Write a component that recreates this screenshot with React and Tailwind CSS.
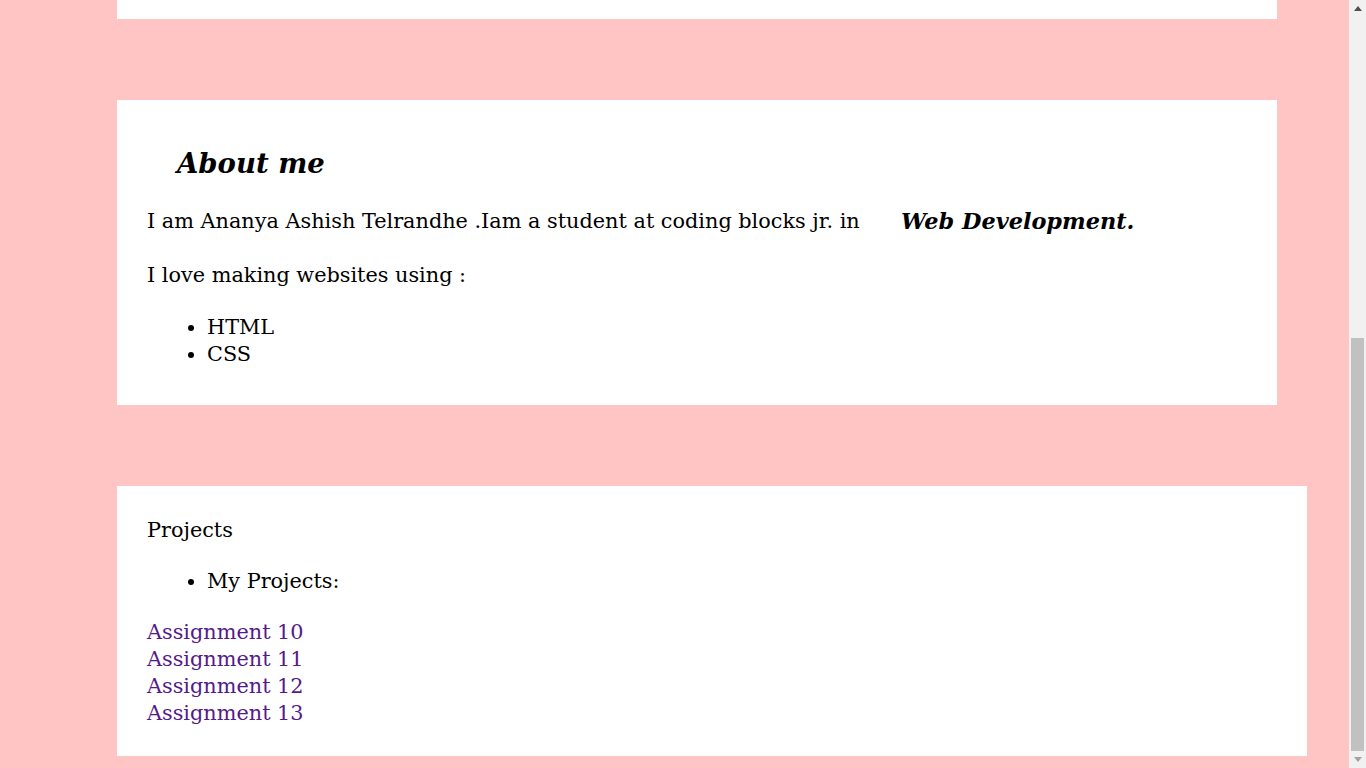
import React, { useLayoutEffect, useRef } from "react";

const serif = { fontFamily: '"DejaVu Serif", Georgia, serif' };

function ScrollBar() {
  return (
    <div className="flex w-[17px] shrink-0 flex-col bg-[#f1f1f1]">
      <div className="flex h-[17px] items-center justify-center">
        <svg width="8" height="5" viewBox="0 0 8 5">
          <path d="M0 5 L4 0 L8 5 Z" fill="#505050" />
        </svg>
      </div>
      <div className="flex flex-1 flex-col justify-end px-[2px]">
        <div className="h-[413px] bg-[#c1c1c1]" />
      </div>
      <div className="flex h-[17px] items-center justify-center">
        <svg width="8" height="5" viewBox="0 0 8 5">
          <path d="M0 0 L8 0 L4 5 Z" fill="#a3a3a3" />
        </svg>
      </div>
    </div>
  );
}

export default function App() {
  const scroller = useRef(null);

  // page is shown scrolled all the way down
  useLayoutEffect(() => {
    if (scroller.current) scroller.current.scrollTop = scroller.current.scrollHeight;
  }, []);

  return (
    <div className="flex h-screen bg-[#ffc5c5]">
      <div
        ref={scroller}
        className="flex-1 overflow-y-scroll text-black [scrollbar-width:none]"
        style={serif}
      >
        {/* header block, off screen above */}
        <section className="mt-[81px] ml-[117px] w-[1160px] h-[535px] bg-white" />

        {/* About */}
        <section className="mt-[81px] ml-[117px] w-[1160px] bg-white px-[30px] pt-[46px] pb-[37px]">
          <h2 className="pl-[30px] text-[27.5px] leading-[34px] font-bold italic">About me</h2>
          <p className="mt-[28px] text-[20.8px] leading-[27px] flex">
            <span className="w-[754px]">I am Ananya Ashish Telrandhe .Iam a student at coding blocks jr. in</span>
            <strong className="italic font-bold text-[22.4px]">Web Development.</strong>
          </p>
          <p className="mt-[27px] text-[20.8px] leading-[27px]">I love making websites using :</p>
          <ul className="mt-[25px] list-disc pl-[60px] text-[20.8px] leading-[27px]">
            <li>HTML</li>
            <li>CSS</li>
          </ul>
        </section>

        {/* Projects */}
        <section className="mt-[81px] mb-[12px] ml-[117px] w-[1190px] bg-white px-[30px] pt-[31px] pb-[29px] text-[20.8px] leading-[27px]">
          <p>Projects</p>
          <ul className="mt-[24px] list-disc pl-[60px]">
            <li>My Projects:</li>
          </ul>
          <div className="mt-[24px] flex flex-col items-start text-[#551a8b]">
            <a href="#a10">Assignment 10</a>
            <a href="#a11">Assignment 11</a>
            <a href="#a12">Assignment 12</a>
            <a href="#a13">Assignment 13</a>
          </div>
        </section>
      </div>
      <ScrollBar />
    </div>
  );
}
